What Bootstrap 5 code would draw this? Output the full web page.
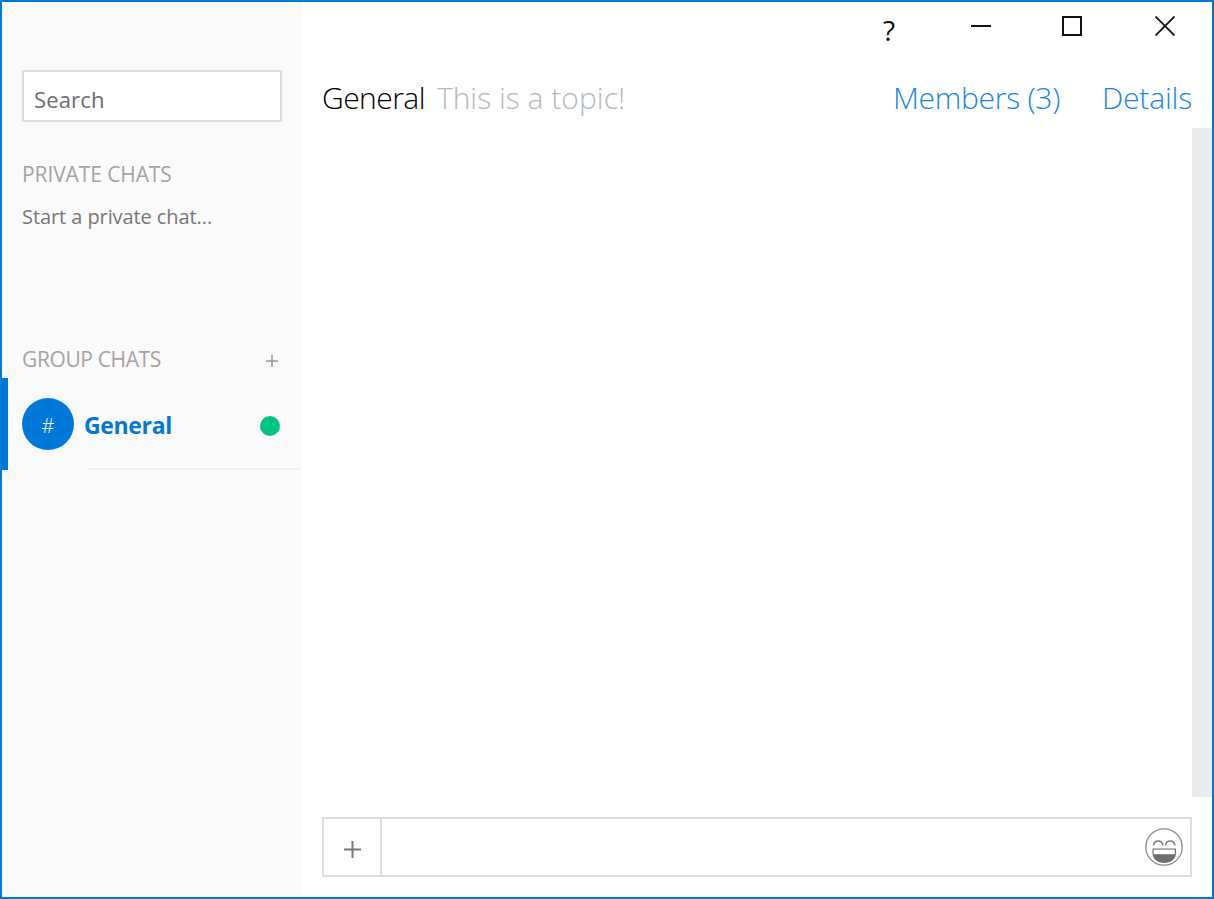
<!DOCTYPE html>
<html lang="en">
<head>
<meta charset="utf-8">
<title>General</title>
<link href="https://cdn.jsdelivr.net/npm/bootstrap@5.3.0/dist/css/bootstrap.min.css" rel="stylesheet">
<style>
html,body{height:100%;margin:0;background:#fff}
body{font-family:"Open Sans","Noto Sans","Liberation Sans",sans-serif;overflow:hidden}
.win{width:1214px;height:899px;border:2px solid #0078d7;background:#fff}
.side{width:300px;background:#fafafa;flex:none}
.searchbox{margin:68px 20px 0 20px;height:52px;border:2px solid #ddd;background:#fff;padding:0 10px;font-size:22px;letter-spacing:.15px;color:#6c6c70;line-height:54px;width:260px}
.sec-title{font-size:21px;letter-spacing:-.1px;color:#a6a2a2;line-height:28px;font-weight:400}
.sec-a{margin:38px 20px 0}
.hint{margin:15px 20px 0;font-size:20px;letter-spacing:-.08px;color:#777;line-height:28px}
.sec-b{margin:114px 20px 0;height:28px;padding-right:3px;letter-spacing:-.38px}
.plus-s{width:14px;height:14px;margin-top:9px}
.row-chat{height:92px;margin-top:5px;border-left:6px solid #0078d7;padding-left:14px;padding-right:22px}
.avatar{width:52px;height:52px;background:#0078d7;color:#fff;font-size:20px;font-weight:300;line-height:56px;text-align:center}
.chat-name{margin-left:10px;font-size:23px;font-weight:700;color:#0078d7;letter-spacing:-.35px;line-height:52px;padding-top:1px}
.dot{width:20px;height:20px;background:#00c281;margin-top:4px}
.rule{margin-left:86px;margin-top:-2px;height:2px;background:#f1f1f1;width:212px}
.ctl-row{height:68px;flex:none}
.ctl-help{font-size:28px;color:#111;line-height:34px;width:20px;text-align:center;margin:11px 0 0 577px}
.ctl{width:20px;height:20px;margin-top:14px}
.ctl-min{margin-left:72px}
.ctl-max{margin-left:71px}
.ctl-close{margin-left:73px}
.head-row{height:58px;flex:none;padding:0 20px;align-items:flex-start}
.t-main{font-size:30px;font-weight:300;letter-spacing:-.55px;color:#000;line-height:56px}
.t-topic{font-size:30px;font-weight:300;letter-spacing:.02px;color:#b4b8c0;line-height:56px;margin-left:12px}
.t-link{font-size:30px;font-weight:300;letter-spacing:-.17px;color:#1585f5;line-height:56px}
.t-members{letter-spacing:-.27px}
.gap-l{margin-left:42px}
.track{width:20px;background:#ebebeb;height:669px}
.bodyrow{height:669px;flex:none}
.composer{margin:20px 20px 0;height:60px;border:2px solid #ddd;width:870px;flex:none}
.attach{width:58px;border-right:2px solid #ddd;padding-top:4px}
.emoji{margin-right:7px}
</style>
</head>
<body>
<div class="win d-flex">
  <aside class="side d-flex flex-column">
    <div class="searchbox">Search</div>
    <div class="sec-title sec-a">PRIVATE CHATS</div>
    <div class="hint">Start a private chat...</div>
    <div class="sec-title sec-b d-flex justify-content-between">
      <span>GROUP CHATS</span>
      <svg class="plus-s" viewBox="0 0 14 14"><path d="M7 1v12M1 7h12" stroke="#9b9b9b" stroke-width="1.6" fill="none"/></svg>
    </div>
    <div class="row-chat d-flex align-items-center">
      <div class="avatar rounded-circle">#</div>
      <div class="chat-name flex-grow-1">General</div>
      <div class="dot rounded-circle"></div>
    </div>
    <div class="rule"></div>
  </aside>
  <main class="flex-grow-1 d-flex flex-column">
    <div class="ctl-row d-flex">
      <div class="ctl-help">?</div>
      <svg class="ctl ctl-min" viewBox="0 0 20 20"><path d="M0 10h20" stroke="#111" stroke-width="2"/></svg>
      <svg class="ctl ctl-max" viewBox="0 0 20 20"><rect x="1" y="1" width="18" height="18" fill="none" stroke="#111" stroke-width="2"/></svg>
      <svg class="ctl ctl-close" viewBox="0 0 20 20"><path d="M.5.5l19 19M19.500.5l-19 19" stroke="#111" stroke-width="1.8" fill="none"/></svg>
    </div>
    <div class="head-row d-flex">
      <span class="t-main">General</span><span class="t-topic flex-grow-1">This is a topic!</span>
      <span class="t-link t-members">Members (3)</span><span class="t-link gap-l">Details</span>
    </div>
    <div class="bodyrow d-flex justify-content-end"><div class="track"></div></div>
    <div class="composer d-flex align-items-center">
      <div class="attach h-100 d-flex align-items-center justify-content-center">
        <svg width="17" height="17" viewBox="0 0 17 17"><path d="M8.500 0v17M0 8.500h17" stroke="#777" stroke-width="2" fill="none"/></svg>
      </div>
      <div class="flex-grow-1"></div>
      <svg class="emoji" width="38" height="38" viewBox="0 0 38 38">
        <circle cx="19" cy="19" r="18.200" fill="#fff" stroke="#8a8a8a" stroke-width="1.300"/>
        <path d="M8.500 17.500c.8-6 8.500-6 9.500 0M20.500 17.500c.8-6 8.500-6 9.500 0" fill="none" stroke="#7a7a7a" stroke-width="1.500"/>
        <path d="M7.500 20.500h23.500v4.500c0 6-5 10-11.750 10S7.500 31 7.500 25z" fill="#6f6f6f"/>
        <path d="M8.700 21.600h21.100v4.600H8.700z" fill="#fff"/>
      </svg>
    </div>
  </main>
</div>
<script src="https://cdn.jsdelivr.net/npm/bootstrap@5.3.0/dist/js/bootstrap.bundle.min.js"></script>
</body>
</html>
